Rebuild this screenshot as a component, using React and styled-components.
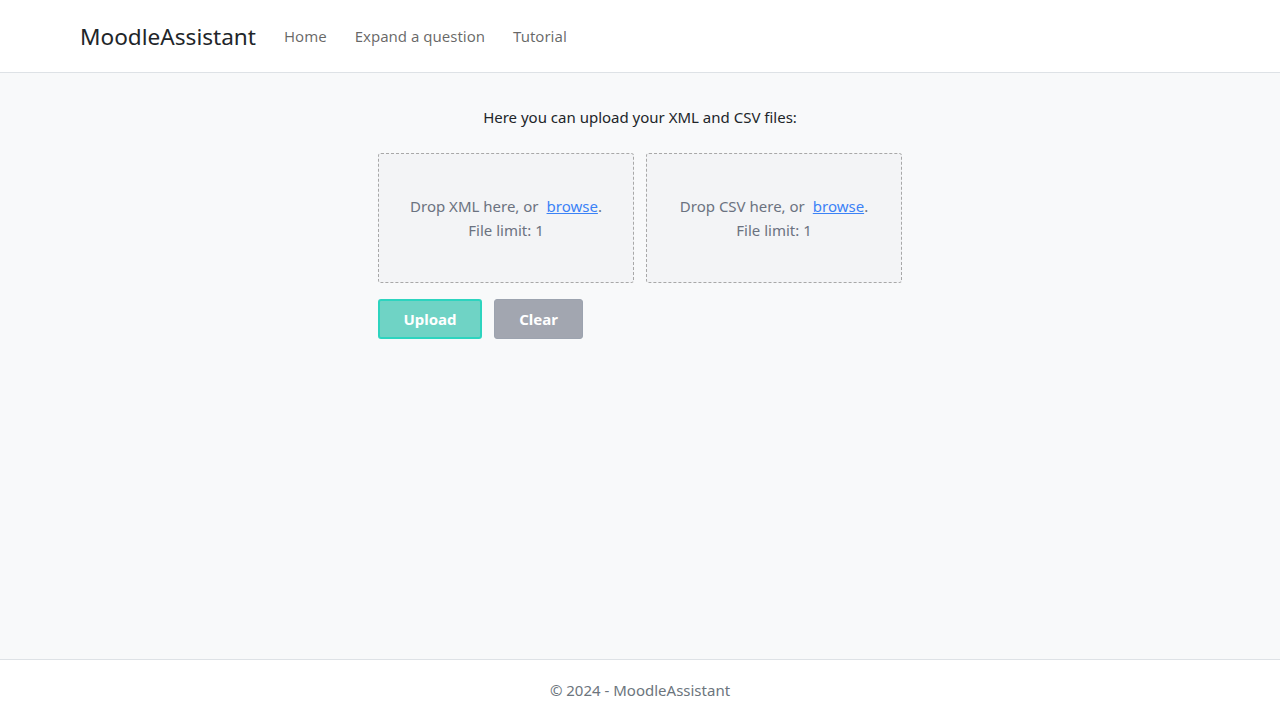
import React from "react";
import styled, { createGlobalStyle } from "styled-components";

const Global = createGlobalStyle`
  html, body { margin: 0; padding: 0; }
  body {
    font-family: "Noto Sans", "Open Sans", sans-serif;
    background: #f8f9fa;
    color: #212529;
  }
  #root { min-height: 720px; display: flex; flex-direction: column; }
`;

const Navbar = styled.nav`
  height: 73px;
  background: #fff;
  border-bottom: 1px solid #dee2e6;
  display: flex;
  align-items: center;
  padding-left: 80px;
  box-sizing: border-box;
  .brand {
    font-size: 22.6px;
    color: #212529;
    margin-right: 14px;
    text-decoration: none;
  }
`;

const NavLinks = styled.ul`
  list-style: none;
  display: flex;
  margin: 0;
  padding: 0;
  li a {
    display: block;
    padding: 8px 14px;
    font-size: 15px;
    color: rgba(0, 0, 0, 0.6);
    text-decoration: none;
  }
`;

const Main = styled.main`
  flex: 1;
  display: flex;
  flex-direction: column;
  align-items: center;
  padding-top: 33px;
  .intro {
    margin: 0 0 25px;
    font-size: 15px;
    line-height: 22px;
    color: #212529;
  }
`;

const Uploads = styled.div`
  width: 524px;
  display: flex;
  flex-direction: column;
  gap: 16px;
`;

const Zones = styled.div`
  display: grid;
  grid-template-columns: 1fr 1fr;
  gap: 12px;
`;

const DropZone = styled.div`
  height: 130px;
  box-sizing: border-box;
  background: #f3f4f6;
  border: 1px dashed #a8a8a8;
  border-radius: 3px;
  display: flex;
  flex-direction: column;
  align-items: center;
  justify-content: center;
  color: #6b7280;
  font-size: 15px;
  line-height: 24px;
  text-align: center;
  a {
    color: #3b82f6;
    text-decoration: underline;
    margin-left: 8px;
  }
`;

const Buttons = styled.div`
  display: flex;
  gap: 12px;
`;

const Button = styled.button`
  height: 40px;
  width: ${(p) => p.$w}px;
  border-radius: 3px;
  font-family: inherit;
  font-weight: 700;
  font-size: 15px;
  color: #fff;
  background: ${(p) => p.$bg};
  border: ${(p) => p.$border};
  box-sizing: border-box;
  cursor: pointer;
`;

const Footer = styled.footer`
  height: 61px;
  box-sizing: border-box;
  background: #fff;
  border-top: 1px solid #dee2e6;
  display: flex;
  align-items: center;
  justify-content: center;
  color: #6c757d;
  font-size: 15px;
`;

export default function App() {
  return (
    <>
      <Global />
      <Navbar>
        <a className="brand" href="#">MoodleAssistant</a>
        <NavLinks>
          <li><a href="#">Home</a></li>
          <li><a href="#">Expand a question</a></li>
          <li><a href="#">Tutorial</a></li>
        </NavLinks>
      </Navbar>
      <Main>
        <p className="intro">Here you can upload your XML and CSV files:</p>
        <Uploads>
          <Zones>
            <DropZone>
              <div>Drop XML here, or<a href="#">browse</a>.</div>
              <div>File limit: 1</div>
            </DropZone>
            <DropZone>
              <div>Drop CSV here, or<a href="#">browse</a>.</div>
              <div>File limit: 1</div>
            </DropZone>
          </Zones>
          <Buttons>
            <Button $w={104} $bg="#6fd3c5" $border="2px solid #2dd4bf">Upload</Button>
            <Button $w={89} $bg="#a2a6b0" $border="1px solid #9ca3af">Clear</Button>
          </Buttons>
        </Uploads>
      </Main>
      <Footer>© 2024 - MoodleAssistant</Footer>
    </>
  );
}
